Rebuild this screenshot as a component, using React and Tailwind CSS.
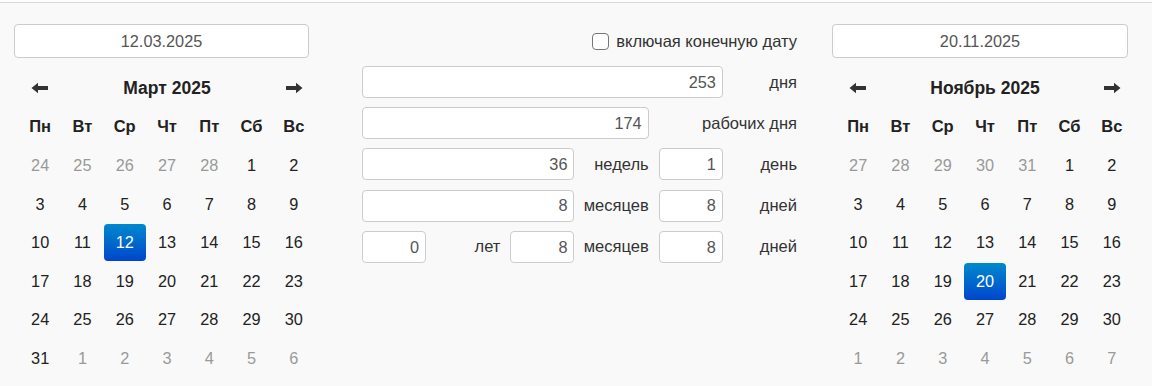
import React from "react";

const WD = ["Пн", "Вт", "Ср", "Чт", "Пт", "Сб", "Вс"];

function Arrow({ dir }) {
  return (
    <svg width="18" height="12" viewBox="0 0 18 12" className={dir === "right" ? "rotate-180" : ""}>
      <path d="M0.5 6 L7 0.8 L7 4 L17 4 L17 8 L7 8 L7 11.2 Z" fill="#333" />
    </svg>
  );
}

function Calendar({ title, days, selected }) {
  return (
    <div className="ml-[5px] mt-[11px] w-[296px]">
      <div className="grid grid-cols-7 h-[38.5px] items-center">
        <div className="flex justify-center"><Arrow dir="left" /></div>
        <div className="col-span-5 text-center font-bold text-[17.5px] text-[#222]">{title}</div>
        <div className="flex justify-center"><Arrow dir="right" /></div>
      </div>
      <div className="grid grid-cols-7 h-[38.5px] items-center">
        {WD.map((d) => (
          <div key={d} className="text-center font-bold text-[16.5px] text-[#222]">{d}</div>
        ))}
      </div>
      <div className="grid grid-cols-7 auto-rows-[38.6px] items-center">
        {days.map((d, i) => {
          const isSel = !d.o && d.n === selected;
          return (
            <div key={i} className="flex justify-center">
              <div
                className={
                  "w-[44px] h-[37px] flex items-center justify-center text-[16.3px] rounded-[4px] " +
                  (isSel
                    ? "bg-gradient-to-b from-[#0088cc] to-[#0044cc] text-white"
                    : d.o
                    ? "text-[#999]"
                    : "text-[#222]")
                }
              >
                {d.n}
              </div>
            </div>
          );
        })}
      </div>
    </div>
  );
}

function build(prevStart, prevEnd, len, nextCount) {
  const a = [];
  if (prevStart) for (let i = prevStart; i <= prevEnd; i++) a.push({ n: i, o: true });
  for (let i = 1; i <= len; i++) a.push({ n: i, o: false });
  for (let i = 1; i <= nextCount; i++) a.push({ n: i, o: true });
  return a;
}

const Input = ({ value, cls = "" }) => (
  <div
    className={
      "h-[32px] bg-white border border-[#ccc] rounded-[4px] flex items-center justify-end pr-[6px] text-[16.3px] text-[#555] " +
      cls
    }
  >
    {value}
  </div>
);

const Label = ({ children, cls = "" }) => (
  <div className={"h-[32px] flex items-center justify-end text-[16.5px] text-[#333] " + cls}>{children}</div>
);

export default function App() {
  const march = build(24, 28, 31, 6);
  const nov = build(27, 31, 30, 7);
  return (
    <div
      className="w-[1152px] h-[386px] bg-[#f9f9f9] overflow-hidden"
      style={{ fontFamily: '"Liberation Sans", Arial, sans-serif' }}
    >
      <div className="h-[2px] bg-[#fdfdfd]" />
      <div className="h-px bg-[#d9d9d9]" />
      <div className="flex pl-[14px] pt-[21px]">
        <div className="w-[295px]">
          <div className="h-[34px] bg-white border border-[#ccc] rounded-[4px] flex items-center justify-center text-[16.3px] text-[#555]">
            12.03.2025
          </div>
          <Calendar title="Март 2025" days={march} selected={12} />
        </div>

        <div className="ml-[53px] w-[435px]">
          <div className="h-[34px] flex items-center justify-end gap-[7px]">
            <div className="w-[17px] h-[17px] border border-[#767676] rounded-[4px] bg-white" />
            <span className="text-[16.5px] text-[#333]">включая конечную дату</span>
          </div>
          <div className="mt-[8px] grid grid-cols-6 gap-x-[10px] gap-y-[9.2px]">
            <Input value="253" cls="col-span-5" />
            <Label>дня</Label>

            <Input value="174" cls="col-span-4" />
            <Label cls="col-span-2">рабочих дня</Label>

            <Input value="36" cls="col-span-3" />
            <Label>недель</Label>
            <Input value="1" />
            <Label>день</Label>

            <Input value="8" cls="col-span-3" />
            <Label>месяцев</Label>
            <Input value="8" />
            <Label>дней</Label>

            <Input value="0" />
            <Label>лет</Label>
            <Input value="8" />
            <Label>месяцев</Label>
            <Input value="8" />
            <Label>дней</Label>
          </div>
        </div>

        <div className="ml-[35px] w-[296px]">
          <div className="h-[34px] bg-white border border-[#ccc] rounded-[4px] flex items-center justify-center text-[16.3px] text-[#555]">
            20.11.2025
          </div>
          <Calendar title="Ноябрь 2025" days={nov} selected={20} />
        </div>
      </div>
    </div>
  );
}
